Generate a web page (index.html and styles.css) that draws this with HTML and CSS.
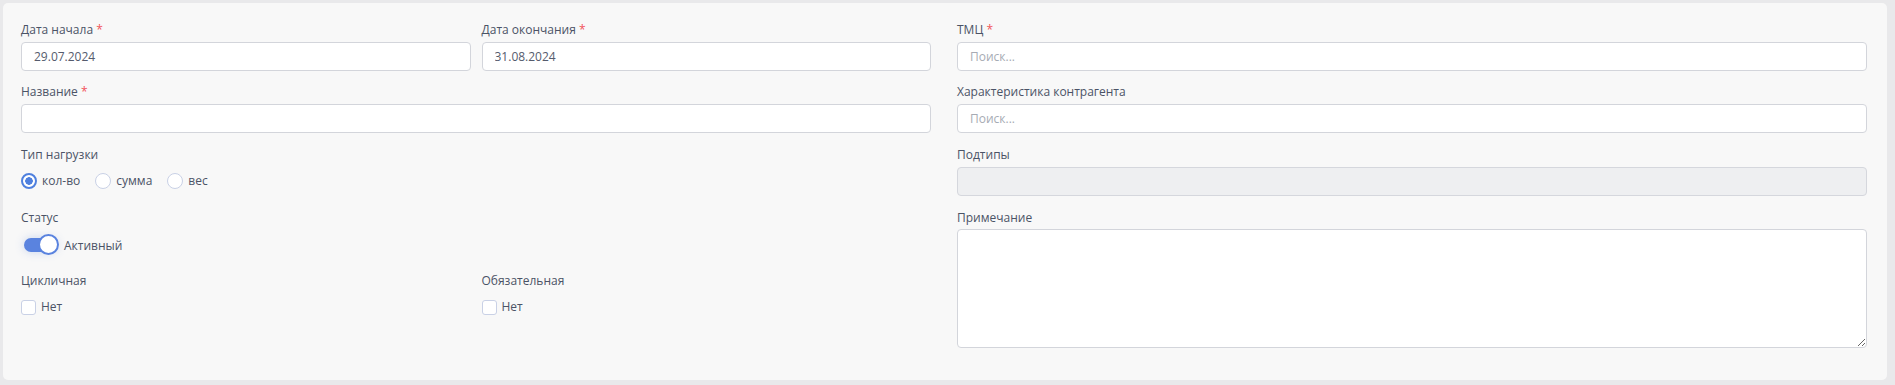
FILE: index.html
```html
<!DOCTYPE html>
<html lang="ru">
  <head>
    <meta charset="UTF-8" />
    <meta name="viewport" content="width=device-width, initial-scale=1.0" />
    <link rel="stylesheet" href="styles.css">
    <title>Нагрузка</title>
  </head>
  <body>
    <div class="card">
      <div class="form">
        <div class="col">
          <div class="pair">
            <div class="field">
              <label class="label">Дата начала <span class="req">*</span></label>
              <input class="input" type="text" value="29.07.2024" />
            </div>
            <div class="field">
              <label class="label">Дата окончания <span class="req">*</span></label>
              <input class="input" type="text" value="31.08.2024" />
            </div>
          </div>

          <div class="field next">
            <label class="label">Название <span class="req">*</span></label>
            <input class="input" type="text" />
          </div>

          <div class="field next-lg">
            <label class="label">Тип нагрузки</label>
            <div class="options">
              <label class="option"><input type="radio" name="load" checked /> кол-во</label>
              <label class="option"><input type="radio" name="load" /> сумма</label>
              <label class="option"><input type="radio" name="load" /> вес</label>
            </div>
          </div>

          <div class="field status">
            <label class="label">Статус</label>
            <div class="switch-row">
              <span class="switch"><span class="knob"></span></span>
              <span class="switch-text">Активный</span>
            </div>
          </div>

          <div class="pair flags">
            <div class="field">
              <label class="label">Цикличная</label>
              <label class="check"><input type="checkbox" /> Нет</label>
            </div>
            <div class="field">
              <label class="label">Обязательная</label>
              <label class="check"><input type="checkbox" /> Нет</label>
            </div>
          </div>
        </div>

        <div class="col">
          <div class="field">
            <label class="label">ТМЦ <span class="req">*</span></label>
            <input class="input" type="text" placeholder="Поиск..." />
          </div>
          <div class="field next">
            <label class="label">Характеристика контрагента</label>
            <input class="input" type="text" placeholder="Поиск..." />
          </div>
          <div class="field next-lg">
            <label class="label">Подтипы</label>
            <input class="input" type="text" disabled />
          </div>
          <div class="field next-lg">
            <label class="label">Примечание</label>
            <textarea class="input note"></textarea>
          </div>
        </div>
      </div>
    </div>
  </body>
</html>
```

FILE: styles.css
```css
body {
    margin: 0;
    background: #e9e9eb;
    font-family: "Open Sans", "Liberation Sans", sans-serif;
    font-size: 12px;
    color: #4b5366;
}

.card {
    box-sizing: border-box;
    height: 377px;
    margin: 3px 8px 0 3px;
    padding: 19px 20px 0 18px;
    background: #f8f8f8;
    border-radius: 5px;
}

.form {
    display: grid;
    grid-template-columns: 1fr 1fr;
    column-gap: 26px;
}

.col {
    display: flex;
    flex-direction: column;
}

.pair {
    display: grid;
    grid-template-columns: 1fr 1fr;
    column-gap: 11px;
}

.field {
    display: flex;
    flex-direction: column;
}

.next {
    margin-top: 13px;
}

.next-lg {
    margin-top: 14px;
}

.status {
    margin-top: 19px;
}

.flags {
    margin-top: 17px;
}

.label {
    line-height: 16px;
    margin-bottom: 4px;
    color: #4b5366;
}

.req {
    color: #f2545b;
}

.input {
    box-sizing: border-box;
    height: 29px;
    padding: 0 12px;
    border: 1px solid #d3d5db;
    border-radius: 4px;
    background: #fff;
    font-family: inherit;
    font-size: 12px;
    color: #555b6d;
    outline: none;
}

.input::placeholder {
    color: #a7abb4;
}

.input:disabled {
    background: #eeeff1;
    border-color: #d5d7dd;
}

.note {
    height: 119px;
    margin-top: -1px;
    padding: 8px 12px;
    resize: vertical;
}

.options {
    display: flex;
    align-items: center;
    height: 20px;
    margin-top: 4px;
}

.option,
.check {
    display: flex;
    align-items: center;
    line-height: 20px;
    margin-right: 15px;
    color: #4b5366;
}

.option input {
    appearance: none;
    box-sizing: border-box;
    width: 16px;
    height: 16px;
    margin: 0 5px 0 0;
    border: 1px solid #c9d1e6;
    border-radius: 50%;
    background: #fff;
}

.option input:checked {
    border: 2px solid #4f80de;
    background: radial-gradient(circle, #4f80de 0 3.5px, #fff 4px);
}

.switch-row {
    display: flex;
    align-items: center;
    height: 22px;
    margin-top: 4px;
}

.switch {
    position: relative;
    width: 33px;
    height: 14px;
    margin-left: 3px;
    border-radius: 7px;
    background: #5a83df;
    box-shadow: 0 0 10px rgba(90, 131, 223, 0.3);
}

.knob {
    position: absolute;
    top: -4px;
    right: -2px;
    box-sizing: border-box;
    width: 21px;
    height: 21px;
    border: 2px solid #5a83df;
    border-radius: 50%;
    background: #fff;
}

.switch-text {
    margin-left: 7px;
}

.check {
    height: 20px;
    margin-top: 4px;
}

.check input {
    appearance: none;
    box-sizing: border-box;
    width: 15px;
    height: 15px;
    margin: 0 5px 0 0;
    border: 1px solid #c9d1e6;
    border-radius: 3px;
    background: #fff;
}
```
